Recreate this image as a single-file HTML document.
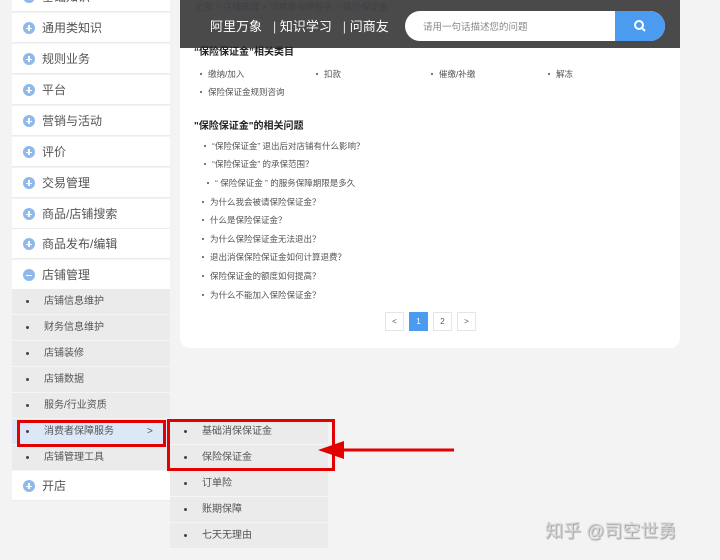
<!DOCTYPE html>
<html><head><meta charset="utf-8"><style>
*{margin:0;padding:0;box-sizing:border-box}
body{width:720px;height:560px;background:#f3f3f3;position:relative;overflow:hidden;font-family:"Liberation Sans","Noto Sans CJK SC",sans-serif}
.a{position:absolute}
.mi{position:absolute;left:12px;width:158px;height:30px;background:#fff;border-bottom:1px solid #ececec;font-size:12px;color:#555;line-height:30px;padding-left:30px}
.mi i{position:absolute;left:11px;top:9px;width:12px;height:12px;border-radius:50%;background:#8fb9ea}
.mi i:before{content:"";position:absolute;left:3px;top:5.5px;width:6px;height:1.2px;background:#fff}
.mi i.p:after{content:"";position:absolute;left:5.4px;top:3px;width:1.2px;height:6px;background:#fff}
.si{position:absolute;width:158px;height:26px;background:#ebebeb;border-bottom:1px solid #f5f5f5;font-size:10px;color:#555;line-height:25px;padding-left:32px}
.si:before{content:"";position:absolute;left:14px;top:11px;width:3px;height:3px;background:#444;border-radius:50%}
.li{position:absolute;font-size:8.5px;color:#555;white-space:nowrap}
.li:before{content:"";position:absolute;left:-8px;top:5px;width:2px;height:2px;background:#777}
.pg{position:absolute;top:312px;width:19px;height:19px;border:1px solid #e5e5e5;font-size:8px;text-align:center;line-height:17px;color:#555;background:#fff}
.rb{position:absolute;border:3px solid #e20000}
</style></head><body>
<div class="mi" style="top:-18px"><i class="p"></i>基础知识</div>
<div class="mi" style="top:13px"><i class="p"></i>通用类知识</div>
<div class="mi" style="top:44px"><i class="p"></i>规则业务</div>
<div class="mi" style="top:75px"><i class="p"></i>平台</div>
<div class="mi" style="top:106px"><i class="p"></i>营销与活动</div>
<div class="mi" style="top:137px"><i class="p"></i>评价</div>
<div class="mi" style="top:168px"><i class="p"></i>交易管理</div>
<div class="mi" style="top:199px"><i class="p"></i>商品/店铺搜索</div>
<div class="mi" style="top:229px"><i class="p"></i>商品发布/编辑</div>
<div class="mi" style="top:260px"><i></i>店铺管理</div>
<div class="si" style="left:12px;top:289px">店铺信息维护</div>
<div class="si" style="left:12px;top:315px">财务信息维护</div>
<div class="si" style="left:12px;top:341px">店铺装修</div>
<div class="si" style="left:12px;top:367px">店铺数据</div>
<div class="si" style="left:12px;top:393px">服务/行业资质</div>
<div class="si" style="left:12px;top:419px;background:#dce8f8">消费者保障服务<span class="a" style="left:135px">&gt;</span></div>
<div class="si" style="left:12px;top:445px">店铺管理工具</div>
<div class="mi" style="top:471px"><i class="p"></i>开店</div>
<div class="si" style="left:170px;top:419px">基础消保保证金</div>
<div class="si" style="left:170px;top:445px">保险保证金</div>
<div class="si" style="left:170px;top:471px">订单险</div>
<div class="si" style="left:170px;top:497px">账期保障</div>
<div class="si" style="left:170px;top:523px">七天无理由</div>

<div class="a" style="left:180px;top:0;width:500px;height:348px;background:#fff;border-radius:0 0 10px 10px"></div>
<div class="a" style="left:195px;top:0;font-size:9px;color:#4a6fb0">全部 &gt; 店铺管理 &gt; 消费者保障服务 &gt; 保险保证金</div>
<div class="a" style="left:180px;top:0;width:500px;height:48px;background:rgba(60,60,60,.93)"></div>
<div class="a" style="left:210px;top:16px;font-size:13px;color:#fff;white-space:nowrap">阿里万象 &nbsp;&nbsp;<span style="color:#ddd">|</span>&nbsp;知识学习 &nbsp;&nbsp;<span style="color:#ddd">|</span>&nbsp;问商友</div>
<div class="a" style="left:405px;top:11px;width:260px;height:30px;background:#fff;border-radius:15px;overflow:hidden"><span class="a" style="left:18px;top:8px;font-size:9.5px;color:#888">请用一句话描述您的问题</span><div class="a" style="left:210px;top:0;width:50px;height:30px;background:#4b9cf0"><svg class="a" style="left:18px;top:8px" width="14" height="14"><circle cx="6" cy="6" r="4" fill="none" stroke="#fff" stroke-width="2"/><path d="M9 9l3 3" stroke="#fff" stroke-width="2"/></svg></div></div>
<div class="a" style="left:194px;top:43px;font-size:10px;font-weight:bold;color:#222">“保险保证金”相关类目</div>
<div class="li" style="left:208px;top:68px">缴纳/加入</div>
<div class="li" style="left:324px;top:68px">扣款</div>
<div class="li" style="left:439px;top:68px">催缴/补缴</div>
<div class="li" style="left:556px;top:68px">解冻</div>
<div class="li" style="left:208px;top:86px">保险保证金规则咨询</div>
<div class="a" style="left:194px;top:117px;font-size:10px;font-weight:bold;color:#222">"保险保证金"的相关问题</div>
<div class="li" style="left:212px;top:140px">“保险保证金” 退出后对店铺有什么影响？</div>
<div class="li" style="left:212px;top:158px">“保险保证金” 的承保范围？</div>
<div class="li" style="left:215px;top:177px">“ 保险保证金 ” 的服务保障期限是多久</div>
<div class="li" style="left:210px;top:196px">为什么我会被请保险保证金？</div>
<div class="li" style="left:210px;top:214px">什么是保险保证金？</div>
<div class="li" style="left:210px;top:233px">为什么保险保证金无法退出？</div>
<div class="li" style="left:210px;top:251px">退出消保保险保证金如何计算退费？</div>
<div class="li" style="left:210px;top:270px">保险保证金的额度如何提高？</div>
<div class="li" style="left:210px;top:289px">为什么不能加入保险保证金？</div>
<div class="pg" style="left:385px">&lt;</div>
<div class="pg" style="left:409px;background:#4b9cf0;border-color:#4b9cf0;color:#fff">1</div>
<div class="pg" style="left:433px">2</div>
<div class="pg" style="left:457px">&gt;</div>

<div class="rb" style="left:17px;top:420px;width:149px;height:27px"></div>
<div class="rb" style="left:167px;top:419px;width:168px;height:52px"></div>
<svg class="a" style="left:314px;top:438px" width="140" height="26"><path d="M30 12h116" stroke="#e20000" stroke-width="3"/><path d="M4 12L30 3V21Z" fill="#e20000"/></svg>
<div class="a" style="left:545px;top:517px;font-size:18px;color:#d6d6d6;text-shadow:1px 1px 1px #999;white-space:nowrap">知乎 @司空世勇</div>
</body></html>
